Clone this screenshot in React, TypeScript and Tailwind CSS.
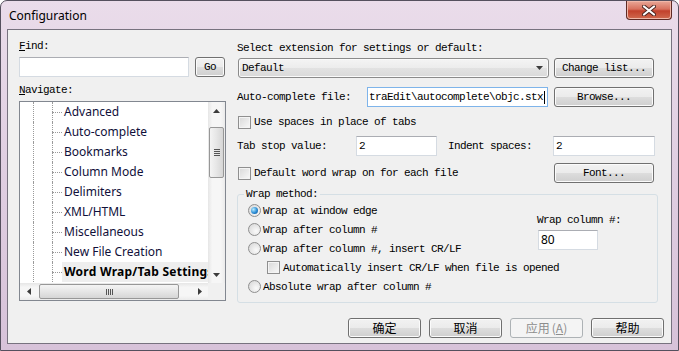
import React from 'react';

const mono = "font-['Liberation_Mono',monospace] text-[11px] leading-[12px] tracking-[-0.6px] text-black whitespace-nowrap";
const ui = "font-['Noto_Sans',sans-serif]";
const cjk = "font-['Noto_Sans_CJK_SC',sans-serif]";

const items = [
  'Advanced',
  'Auto-complete',
  'Bookmarks',
  'Column Mode',
  'Delimiters',
  'XML/HTML',
  'Miscellaneous',
  'New File Creation',
  'Word Wrap/Tab Settings',
];

function WinButton({ className = '', children }: { className?: string; children: React.ReactNode }) {
  return (
    <div
      className={`flex h-[20px] shrink-0 items-center justify-center rounded-[3px] border border-[#707070] bg-[linear-gradient(180deg,#f2f2f2_0%,#ebebeb_50%,#dddddd_51%,#cfcfcf_100%)] shadow-[inset_0_0_0_1px_#fbfbfb] ${className}`}
    >
      {children}
    </div>
  );
}

function Check() {
  return (
    <span className="box-border inline-block h-[13px] w-[13px] shrink-0 border border-[#8f8f8f] bg-[linear-gradient(135deg,#d8d8d8,#f9f9f9)] shadow-[inset_0_0_0_1px_#f4f4f4]" />
  );
}

function Radio({ on = false }: { on?: boolean }) {
  return (
    <span className="box-border flex h-[13px] w-[13px] shrink-0 items-center justify-center rounded-full border border-[#8f8f8f] bg-[radial-gradient(circle_at_65%_65%,#fafafa,#d4d4d4)]">
      {on && (
        <span className="h-[7px] w-[7px] rounded-full bg-[radial-gradient(circle_at_35%_35%,#b7ecff,#2a8bd4_55%,#0d4f8f)]" />
      )}
    </span>
  );
}

function Input({ className = '', children }: { className?: string; children?: React.ReactNode }) {
  return (
    <div
      className={`flex h-[20px] shrink-0 items-center border border-[#d5dbe2] border-t-[#abadb3] bg-white pl-[2px] ${className}`}
    >
      {children}
    </div>
  );
}

function Arrow({ dir }: { dir: 'up' | 'down' | 'left' | 'right' }) {
  const pts = {
    up: '0,4 3.5,0 7,4',
    down: '0,0 7,0 3.5,4',
    left: '4,0 4,7 0,3.5',
    right: '0,0 4,3.5 0,7',
  }[dir];
  const vertical = dir === 'up' || dir === 'down';
  return (
    <svg width={vertical ? 7 : 4} height={vertical ? 4 : 7} viewBox={vertical ? '0 0 7 4' : '0 0 4 7'}>
      <polygon points={pts} fill="#3c3c3c" />
    </svg>
  );
}

function Tree() {
  return (
    <div className="mt-[5px] flex h-[200px] w-[207px] flex-col border border-[#828790] bg-white">
      <div className="flex h-[181px]">
        <div className="w-[188px] overflow-hidden">
          {items.map((t, i) => {
            const last = i === items.length - 1;
            return (
              <div key={t} className="flex h-[20px] whitespace-nowrap">
                <div className="w-[13px] shrink-0" />
                <div className="w-[19px] shrink-0 border-l border-dotted border-[#9a9a9a]" />
                <div className="flex w-[10px] shrink-0 flex-col">
                  <div className="h-[10px] border-l border-dotted border-[#9a9a9a]" />
                  <div className="h-[10px] border-l border-t border-dotted border-[#9a9a9a]" />
                </div>
                <div
                  className={
                    last
                      ? `${ui} flex flex-1 items-center bg-[#eeeeee] pl-[2px] text-[12px] font-bold tracking-[0.25px] text-black`
                      : `${ui} flex flex-1 items-center pl-[2px] text-[12px] text-[#10103a]`
                  }
                >
                  {t}
                </div>
              </div>
            );
          })}
        </div>
        {/* vertical scrollbar */}
        <div className="flex w-[17px] flex-col bg-[linear-gradient(90deg,#e6e6e6,#f6f6f6_25%,#f6f6f6_75%,#ebebeb)]">
          <div className="flex h-[17px] items-center justify-center">
            <Arrow dir="up" />
          </div>
          <div className="mx-[1px] mt-[8px] flex h-[51px] flex-col items-center justify-center gap-[1px] rounded-[2px] border border-[#979797] bg-[linear-gradient(90deg,#f4f4f4,#e6e6e6_50%,#d6d6d6)]">
            <div className="h-[1px] w-[6px] bg-[#555]" />
            <div className="h-[1px] w-[6px] bg-[#555]" />
            <div className="h-[1px] w-[6px] bg-[#555]" />
            <div className="h-[1px] w-[6px] bg-[#555]" />
          </div>
          <div className="flex-1" />
          <div className="flex h-[17px] items-center justify-center">
            <Arrow dir="down" />
          </div>
        </div>
      </div>
      {/* horizontal scrollbar */}
      <div className="flex h-[17px]">
        <div className="flex w-[188px] bg-[linear-gradient(180deg,#e6e6e6,#f6f6f6_25%,#f6f6f6_75%,#ebebeb)]">
          <div className="flex w-[17px] items-center justify-center">
            <Arrow dir="left" />
          </div>
          <div className="my-[1px] ml-[2px] flex w-[140px] items-center justify-center gap-[1px] rounded-[2px] border border-[#979797] bg-[linear-gradient(180deg,#f4f4f4,#e6e6e6_50%,#d6d6d6)]">
            <div className="h-[6px] w-[1px] bg-[#555]" />
            <div className="h-[6px] w-[1px] bg-[#555]" />
            <div className="h-[6px] w-[1px] bg-[#555]" />
            <div className="h-[6px] w-[1px] bg-[#555]" />
          </div>
          <div className="flex-1" />
          <div className="flex w-[17px] items-center justify-center">
            <Arrow dir="right" />
          </div>
        </div>
        <div className="flex-1 bg-[#f0f0f0]" />
      </div>
    </div>
  );
}

export default function App() {
  return (
    <div className="h-[351px] w-[679px] overflow-hidden bg-white">
      <div className="flex h-full flex-col rounded-t-[7px] border border-[#55505e] bg-[linear-gradient(180deg,#eadcea_0%,#e0cfe2_45%,#d7c2d9_100%)] px-[6px] pb-[6px]">
        {/* title bar */}
        <div className="flex h-[28px] items-start justify-between">
          <span className={`${ui} mt-[6px] pl-[2px] text-[12px] text-black`}>Configuration</span>
          <div className="flex h-[19px] w-[46px] items-center justify-center rounded-b-[4px] border border-t-0 border-[#5e2a24] bg-[linear-gradient(180deg,#e9a898_0%,#d7715e_45%,#c2412c_55%,#d06a4f_100%)] shadow-[inset_0_0_0_1px_#f0b7a8]">
            <svg width="14" height="11" viewBox="0 0 14 11">
              <path d="M2 1.5 L12 9.5 M12 1.5 L2 9.5" stroke="#4a2520" strokeWidth="4" strokeLinecap="round" />
              <path d="M2 1.5 L12 9.5 M12 1.5 L2 9.5" stroke="#ffffff" strokeWidth="2.2" strokeLinecap="round" />
            </svg>
          </div>
        </div>

        {/* client area */}
        <div className="flex flex-1 flex-col border border-[#77727f] bg-[#f0f0f0]">
          <div className="flex h-[273px] pl-[11px]">
            {/* left column */}
            <div className="flex w-[207px] flex-col pt-[10px]">
              <div className={`${mono} h-[12px]`}>
                <u>F</u>ind:
              </div>
              <div className="mt-[5px] flex h-[20px]">
                <Input className="w-[170px]" />
                <WinButton className={`${mono} ml-[6px] w-[30px]`}>Go</WinButton>
              </div>
              <div className={`${mono} mt-[7px] h-[12px]`}>
                <u>N</u>avigate:
              </div>
              <Tree />
            </div>

            {/* right column */}
            <div className="ml-[11px] flex w-[421px] flex-col pt-[12px]">
              <div className={`${mono} h-[12px]`}>Select extension for settings or default:</div>

              <div className="mt-[4px] flex h-[20px]">
                <div className="ml-[1px] flex h-[20px] w-[311px] items-center justify-between rounded-[3px] border border-[#8a8a8a] bg-[linear-gradient(180deg,#f4f4f4_0%,#ececec_50%,#e2e2e2_51%,#d9d9d9_100%)] pl-[3px] pr-[5px] shadow-[inset_0_0_0_1px_#fafafa]">
                  <span className={mono}>Default</span>
                  <Arrow dir="down" />
                </div>
                <WinButton className={`${mono} ml-[5px] w-[100px]`}>Change list...</WinButton>
              </div>

              <div className="mt-[9px] flex h-[20px] items-center">
                <div className={`${mono} w-[130px]`}>Auto-complete file:</div>
                <div className="flex h-[20px] w-[181px] items-center border border-[#7eb4ea] bg-white pl-[1px]">
                  <span className={mono}>traEdit\autocomplete\objc.stx</span>
                  <span className="ml-[1px] h-[13px] w-[1px] bg-black" />
                </div>
                <WinButton className={`${mono} ml-[6px] w-[100px]`}>Browse...</WinButton>
              </div>

              <div className="mt-[7px] flex h-[16px] items-center pl-[1px]">
                <Check />
                <span className={`${mono} ml-[3px]`}>Use spaces in place of tabs</span>
              </div>

              <div className="mt-[6px] flex h-[20px] items-center">
                <div className={`${mono} w-[119px]`}>Tab stop value:</div>
                <Input className="w-[81px]">
                  <span className={mono}>2</span>
                </Input>
                <div className={`${mono} ml-[11px] w-[105px]`}>Indent spaces:</div>
                <Input className="w-[102px]">
                  <span className={mono}>2</span>
                </Input>
              </div>

              <div className="mt-[7px] flex h-[20px] items-center pl-[1px]">
                <Check />
                <span className={`${mono} ml-[3px]`}>Default word wrap on for each file</span>
                <WinButton className={`${mono} ml-auto mr-[4px] w-[100px]`}>Font...</WinButton>
              </div>

              <fieldset className="mt-[5px] h-[115px] w-[421px] rounded-[3px] border border-[#d5dfe5]">
                <legend className={`${mono} ml-[6px] px-[2px]`}>Wrap method:</legend>
                <div className="flex pl-[10px] pt-[1px]">
                  <div className="flex w-[289px] flex-col">
                    <div className="flex h-[19px] items-center">
                      <Radio on />
                      <span className={`${mono} ml-[2px]`}>Wrap at window edge</span>
                    </div>
                    <div className="flex h-[19px] items-center">
                      <Radio />
                      <span className={`${mono} ml-[2px]`}>Wrap after column #</span>
                    </div>
                    <div className="flex h-[19px] items-center">
                      <Radio />
                      <span className={`${mono} ml-[2px]`}>Wrap after column #, insert CR/LF</span>
                    </div>
                    <div className="flex h-[19px] items-center pl-[19px]">
                      <Check />
                      <span className={`${mono} ml-[3px]`}>Automatically insert CR/LF when file is opened</span>
                    </div>
                    <div className="flex h-[19px] items-center">
                      <Radio />
                      <span className={`${mono} ml-[2px]`}>Absolute wrap after column #</span>
                    </div>
                  </div>
                  <div className="flex flex-col pt-[13px]">
                    <div className={`${mono} h-[12px]`}>Wrap column #:</div>
                    <Input className="ml-[1px] mt-[4px] w-[60px]">
                      <span className={`${ui} text-[12px] text-black`}>80</span>
                    </Input>
                  </div>
                </div>
              </fieldset>
            </div>
          </div>

          {/* dialog buttons */}
          <div className="mt-[15px] flex justify-end gap-[8px] pr-[7px]">
            <WinButton className={`${cjk} w-[73px] border-[#3c8ccc] text-[12px] text-black shadow-[inset_0_0_0_1px_#a8dcf6]`}>
              确定
            </WinButton>
            <WinButton className={`${cjk} w-[73px] text-[12px] text-black`}>取消</WinButton>
            <div
              className={`${cjk} flex h-[20px] w-[73px] items-center justify-center rounded-[3px] border border-[#adb2b5] bg-[#f4f4f4] text-[12px] text-[#8d8d8d]`}
            >
              应用<span className="ml-[2px]">(<u>A</u>)</span>
            </div>
            <WinButton className={`${cjk} w-[73px] text-[12px] text-black`}>帮助</WinButton>
          </div>
        </div>
      </div>
    </div>
  );
}
